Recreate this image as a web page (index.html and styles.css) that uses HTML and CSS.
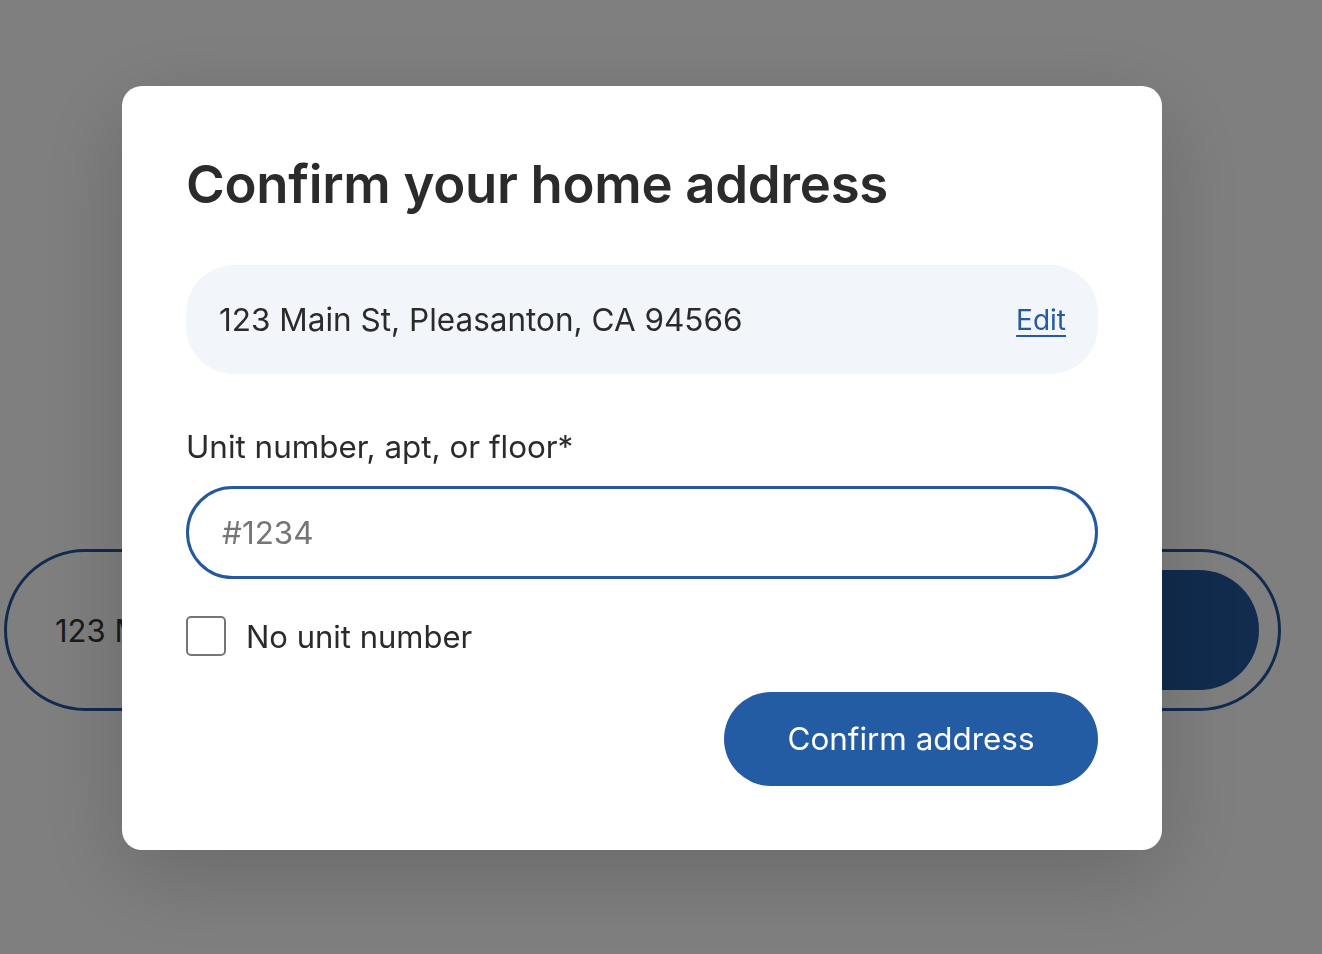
FILE: index.html
```html
<!DOCTYPE html>
<html lang="en">
<head>
<meta charset="utf-8">
<title>Confirm your home address</title>
<link rel="stylesheet" href="styles.css">
</head>
<body>
  <main class="page">
    <div class="search-pill">
      <span class="search-text">123 Main St, Pleasanton, CA 94566</span>
      <span class="search-btn"></span>
    </div>
  </main>

  <div class="overlay">
    <section class="modal" role="dialog" aria-labelledby="modal-title">
      <h1 id="modal-title" class="modal-title">Confirm your home address</h1>
      <div class="address-box">
        <span class="address-text">123 Main St, Pleasanton, CA 94566</span>
        <a class="edit-link" href="#">Edit</a>
      </div>
      <label class="field-label" for="unit">Unit number, apt, or floor*</label>
      <input id="unit" class="field-input" type="text" placeholder="#1234">
      <label class="check-row">
        <span class="check-box"></span>
        <span class="check-label">No unit number</span>
      </label>
      <div class="actions">
        <button class="primary-btn" type="button">Confirm address</button>
      </div>
    </section>
  </div>
</body>
</html>
```

FILE: styles.css
```css
* { box-sizing: border-box; }

html, body {
  margin: 0;
  height: 100%;
}

body {
  font-family: Inter, "Noto Sans", "Liberation Sans", sans-serif;
  background: #ffffff;
  color: #333333;
  overflow: hidden;
}

.page {
  padding: 549px 41px 0 4px;
}

.search-pill {
  display: flex;
  align-items: center;
  justify-content: space-between;
  height: 162px;
  border: 3px solid #22579f;
  border-radius: 81px;
  padding: 0 19px 0 48px;
}

.search-text {
  font-size: 31px;
  color: #363636;
  width: 67px;
  white-space: nowrap;
  overflow: hidden;
}

.search-btn {
  display: block;
  width: 300px;
  height: 120px;
  border-radius: 60px;
  background: #23589d;
}

.overlay {
  position: fixed;
  inset: 0;
  background: rgba(0, 0, 0, 0.5);
  display: flex;
  align-items: flex-start;
  justify-content: center;
  padding-top: 86px;
}

.modal {
  width: 1040px;
  margin-left: -38px;
  background: #ffffff;
  border-radius: 20px;
  padding: 64px;
  display: flex;
  flex-direction: column;
  box-shadow: 0 24px 90px rgba(0, 0, 0, 0.18);
}

.modal-title {
  margin: 0;
  font-size: 52.7px;
  line-height: 68px;
  font-weight: 600;
  color: #2b2b2b;
  letter-spacing: -0.3px;
}

.address-box {
  margin-top: 47px;
  height: 109px;
  border-radius: 48px;
  background: #f2f5f9;
  display: flex;
  align-items: center;
  justify-content: space-between;
  padding: 0 32px 0 33px;
}

.address-text {
  font-size: 31.5px;
  color: #2b2b2b;
}

.edit-link {
  font-size: 28px;
  color: #2459a3;
  text-decoration: underline;
  text-underline-offset: 5px;
  text-decoration-thickness: 2px;
}

.field-label {
  margin-top: 55px;
  font-size: 31.4px;
  line-height: 36px;
  color: #2b2b2b;
}

.field-input {
  margin-top: 21px;
  height: 93px;
  width: 100%;
  border: 3px solid #2459a0;
  border-radius: 47px;
  padding: 0 33px;
  font-family: inherit;
  font-size: 31.4px;
  color: #2b2b2b;
  outline: none;
  background: #ffffff;
}

.field-input::placeholder {
  color: #767676;
}

.check-row {
  margin-top: 37px;
  display: flex;
  align-items: center;
  gap: 20px;
}

.check-box {
  width: 40px;
  height: 40px;
  border: 2px solid #767676;
  border-radius: 5px;
  background: #ffffff;
}

.check-label {
  font-size: 31px;
  color: #2b2b2b;
}

.actions {
  margin-top: 36px;
  display: flex;
  justify-content: flex-end;
}

.primary-btn {
  width: 374px;
  height: 94px;
  border: none;
  border-radius: 47px;
  background: #245ca3;
  color: #ffffff;
  font-family: inherit;
  font-size: 31.4px;
  cursor: pointer;
}
```
